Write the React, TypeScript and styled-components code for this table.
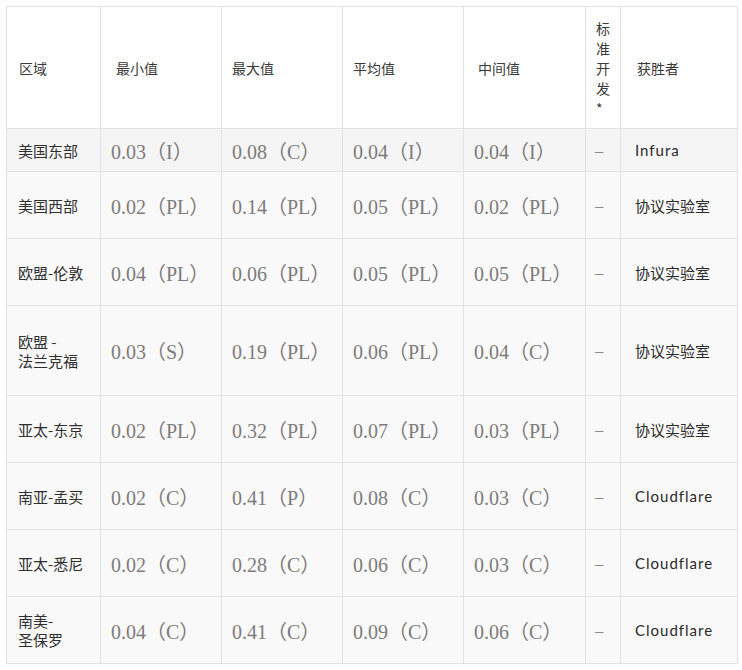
import styled, { createGlobalStyle } from "styled-components";

const GlobalStyle = createGlobalStyle`
  body {
    margin: 0;
    background: #ffffff;
    font-family: "Noto Sans CJK SC", sans-serif;
  }
`

const Page = styled.div`
  padding: 6px 5px 7px 6px;
`

const Table = styled.table`
  width: 731px;
  table-layout: fixed;
  border-collapse: collapse;
  border: 1px solid #e3e1e1;
`

const HeadRow = styled.tr`
  height: 122px;
  background: #ffffff;
`

type RowProps = {
   $height: number
   $shade: string
}
const Row = styled.tr<RowProps>`
  height: ${p => p.$height}px;
  background: ${p => p.$shade};
`

type CellProps = {
   $pad?: number
}
const HeadCell = styled.th<CellProps>`
  border: 1px solid #e3e1e1;
  padding: 0 6px 0 ${p => p.$pad ?? 10}px;
  text-align: left;
  vertical-align: middle;
  font-weight: normal;
  font-size: 14px;
  color: #3a3a3a;
  font-family: "Noto Sans CJK SC", sans-serif;
`

const VerticalHead = styled(HeadCell)`
  padding: 0 8px 0 10px;
  font-size: 14px;
  line-height: 20px;
  word-break: break-all;
`

const Region = styled.td`
  border: 1px solid #e3e1e1;
  padding: 0 6px 0 11px;
  vertical-align: middle;
  font-size: 15px;
  line-height: 19px;
  color: #2f2f2f;
  font-family: "Noto Sans CJK SC", sans-serif;
`

const Value = styled.td`
  border: 1px solid #e3e1e1;
  padding: 0 4px 0 10px;
  vertical-align: middle;
  font-size: 20px;
  color: #7d7b7b;
  white-space: nowrap;
  font-family: "Liberation Serif", "Noto Sans CJK SC", serif;
`

const Dash = styled.td`
  border: 1px solid #e3e1e1;
  padding: 0 0 0 9px;
  vertical-align: middle;
  font-size: 15px;
  color: #8a8888;
  font-family: "Liberation Sans", sans-serif;
`

type WinnerProps = {
   $latin: boolean
}
const Winner = styled.td<WinnerProps>`
  border: 1px solid #e3e1e1;
  padding: 0 4px 0 14px;
  vertical-align: middle;
  font-size: 15px;
  letter-spacing: ${p => p.$latin ? "1px" : "0"};
  color: #2a2a2a;
  white-space: nowrap;
  font-family: "Lato", "Noto Sans CJK SC", sans-serif;
`

const colWidths = [94, 121, 121, 121, 122, 35, 117]

type Entry = {
   region: string[]
   min: string
   max: string
   avg: string
   median: string
   winner: string
   height: number
}

const rows: Entry[] = [
   { region: ["美国东部"], min: "0.03（I）", max: "0.08（C）", avg: "0.04（I）", median: "0.04（I）", winner: "Infura", height: 43 },
   { region: ["美国西部"], min: "0.02（PL）", max: "0.14（PL）", avg: "0.05（PL）", median: "0.02（PL）", winner: "协议实验室", height: 67 },
   { region: ["欧盟-伦敦"], min: "0.04（PL）", max: "0.06（PL）", avg: "0.05（PL）", median: "0.05（PL）", winner: "协议实验室", height: 67 },
   { region: ["欧盟 -", "法兰克福"], min: "0.03（S）", max: "0.19（PL）", avg: "0.06（PL）", median: "0.04（C）", winner: "协议实验室", height: 90 },
   { region: ["亚太-东京"], min: "0.02（PL）", max: "0.32（PL）", avg: "0.07（PL）", median: "0.03（PL）", winner: "协议实验室", height: 67 },
   { region: ["南亚-孟买"], min: "0.02（C）", max: "0.41（P）", avg: "0.08（C）", median: "0.03（C）", winner: "Cloudflare", height: 67 },
   { region: ["亚太-悉尼"], min: "0.02（C）", max: "0.28（C）", avg: "0.06（C）", median: "0.03（C）", winner: "Cloudflare", height: 67 },
   { region: ["南美-", "圣保罗"], min: "0.04（C）", max: "0.41（C）", avg: "0.09（C）", median: "0.06（C）", winner: "Cloudflare", height: 67 },
]

export default function App() {
   return (
      <Page>
         <GlobalStyle />
         <Table>
            <colgroup>
               {colWidths.map((w, i) => <col key={i} style={{ width: w }} />)}
            </colgroup>
            <thead>
               <HeadRow>
                  <HeadCell $pad={12}>区域</HeadCell>
                  <HeadCell $pad={15}>最小值</HeadCell>
                  <HeadCell>最大值</HeadCell>
                  <HeadCell>平均值</HeadCell>
                  <HeadCell $pad={14}>中间值</HeadCell>
                  <VerticalHead>标准开发*</VerticalHead>
                  <HeadCell $pad={16}>获胜者</HeadCell>
               </HeadRow>
            </thead>
            <tbody>
               {rows.map((r, i) => (
                  <Row key={i} $height={r.height} $shade={i === 0 ? "#f6f5f5" : "#faf9f9"}>
                     <Region>
                        {r.region.map((line, j) => <div key={j}>{line}</div>)}
                     </Region>
                     <Value>{r.min}</Value>
                     <Value>{r.max}</Value>
                     <Value>{r.avg}</Value>
                     <Value>{r.median}</Value>
                     <Dash>–</Dash>
                     <Winner $latin={/^[A-Za-z]/.test(r.winner)}>{r.winner}</Winner>
                  </Row>
               ))}
            </tbody>
         </Table>
      </Page>
   )
}
